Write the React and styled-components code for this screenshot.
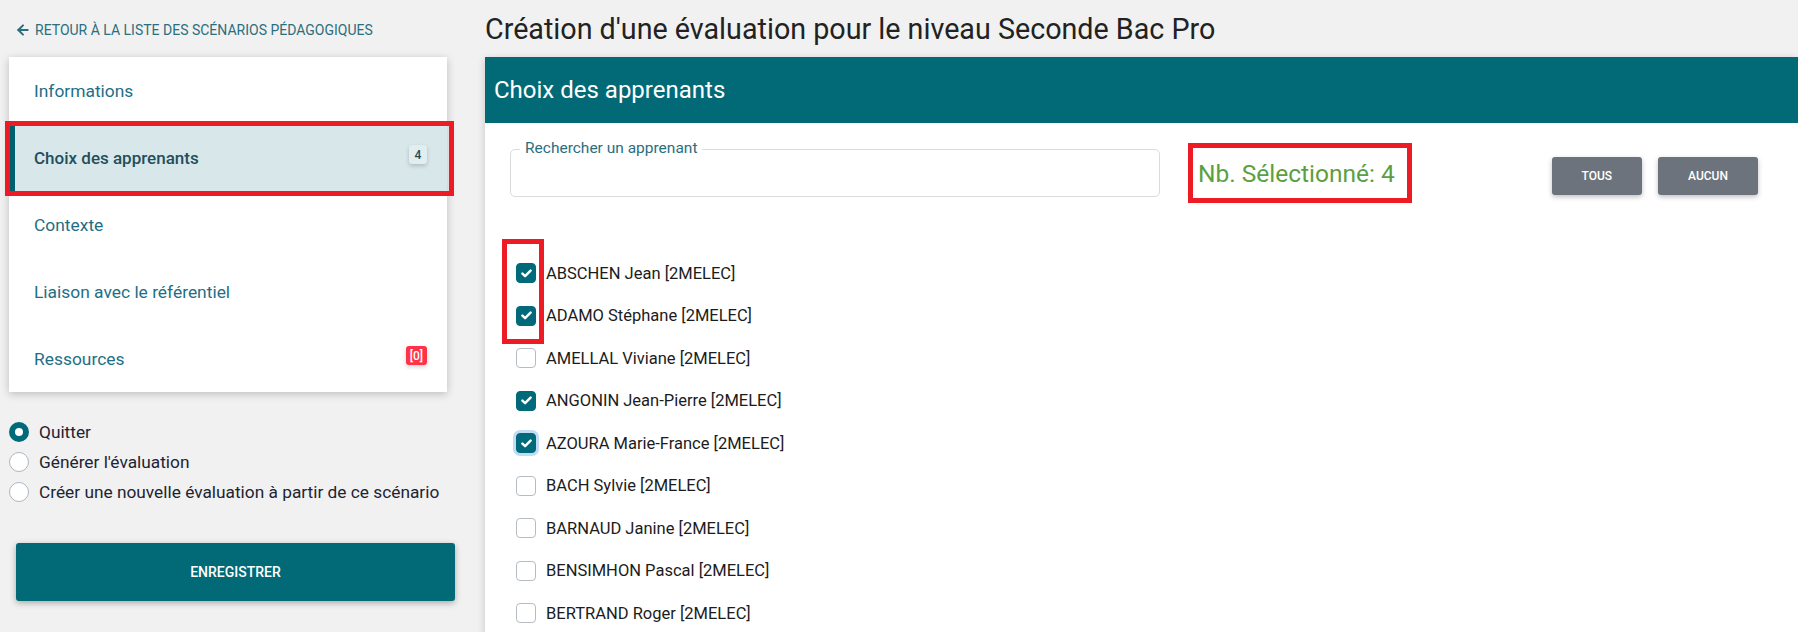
import React from 'react';
import styled, { createGlobalStyle, css } from 'styled-components';
import { ArrowLeft } from 'lucide-react';

const GlobalStyle = createGlobalStyle`
  html, body {
    margin: 0;
    padding: 0;
    height: 632px;
    overflow: hidden;
    background: #f1f1f1;
    font-family: Roboto, "Liberation Sans", sans-serif;
  }
  * {
    box-sizing: border-box;
  }
`;

const navItems = [
  { label: 'Informations' },
  { label: 'Choix des apprenants', active: true, badge: '4' },
  { label: 'Contexte' },
  { label: 'Liaison avec le référentiel' },
  { label: 'Ressources', badge: '[0]', danger: true },
];

const choices = [
  { label: 'Quitter', checked: true },
  { label: "Générer l'évaluation" },
  { label: 'Créer une nouvelle évaluation à partir de ce scénario' },
];

const students = [
  { name: 'ABSCHEN Jean', checked: true },
  { name: 'ADAMO Stéphane', checked: true },
  { name: 'AMELLAL Viviane' },
  { name: 'ANGONIN Jean-Pierre', checked: true },
  { name: 'AZOURA Marie-France', checked: true, focus: true },
  { name: 'BACH Sylvie' },
  { name: 'BARNAUD Janine' },
  { name: 'BENSIMHON Pascal' },
  { name: 'BERTRAND Roger' },
];

const App = () => {
  return (
    <>
      <GlobalStyle />
      <Page>
        <Sidebar>
          <BackLink>
            <ArrowLeft size={16} strokeWidth={3} />
            <span>Retour à la liste des scénarios pédagogiques</span>
          </BackLink>

          <NavCard>
            {navItems.map((item) => (
              <NavItem key={item.label} $active={item.active}>
                <span>{item.label}</span>
                {item.badge && <Badge $danger={item.danger}>{item.badge}</Badge>}
                {item.active && <Highlight $variant="nav" />}
              </NavItem>
            ))}
          </NavCard>

          <RadioGroup>
            {choices.map((c) => (
              <RadioRow key={c.label}>
                <RadioDot $checked={c.checked} />
                <span>{c.label}</span>
              </RadioRow>
            ))}
          </RadioGroup>

          <SaveButton>Enregistrer</SaveButton>
        </Sidebar>

        <Main>
          <Title>Création d'une évaluation pour le niveau Seconde Bac Pro</Title>
          <Panel>
            <PanelHeader>Choix des apprenants</PanelHeader>
            <PanelBody>
              <Toolbar>
                <SearchField>
                  <SearchLabel>Rechercher un apprenant</SearchLabel>
                </SearchField>
                <Counter>
                  Nb. Sélectionné: 4
                  <Highlight $variant="counter" />
                </Counter>
                <Actions>
                  <GrayButton>Tous</GrayButton>
                  <GrayButton>Aucun</GrayButton>
                </Actions>
              </Toolbar>

              <StudentList>
                <Highlight $variant="checks" />
                {students.map((s) => (
                  <StudentRow key={s.name}>
                    <Checkbox $checked={s.checked} $focus={s.focus}>
                      {s.checked && (
                        <svg width="11" height="9" viewBox="0 0 11 9">
                          <path
                            d="M1.4 4.6 L4.1 7.2 L9.6 1.6"
                            fill="none"
                            stroke="#fff"
                            strokeWidth="2.4"
                            strokeLinecap="round"
                            strokeLinejoin="round"
                          />
                        </svg>
                      )}
                    </Checkbox>
                    <span>{s.name} [2MELEC]</span>
                  </StudentRow>
                ))}
              </StudentList>
            </PanelBody>
          </Panel>
        </Main>
      </Page>
    </>
  );
};

const Page = styled.div`
  display: flex;
  width: 1798px;
  height: 632px;
  overflow: hidden;
  padding-left: 9px;
`;

const Sidebar = styled.aside`
  flex: 0 0 446px;
  display: flex;
  flex-direction: column;

  & > * {
    flex: none;
  }
`;

const BackLink = styled.a`
  height: 57px;
  display: flex;
  align-items: center;
  gap: 4px;
  padding: 2px 0 0 6px;
  color: #2b6e7d;
  font-size: 14px;
  text-transform: uppercase;
  cursor: pointer;

  svg {
    flex: none;
  }
`;

const NavCard = styled.nav`
  width: 438px;
  background: #fff;
  box-shadow: 0 2px 8px rgba(0, 0, 0, 0.22);
`;

const NavItem = styled.div`
  position: relative;
  height: 67px;
  display: flex;
  align-items: center;
  justify-content: space-between;
  padding: 0 20px 0 25px;
  font-size: 17.4px;
  color: #1e6f86;

  ${(p) =>
    p.$active &&
    css`
      background: #d8e7ea;
      color: #1f4f5c;
      font-size: 17px;
      font-weight: 500;
      box-shadow: inset 6px 0 0 #00606d;
    `}
`;

const Badge = styled.span`
  min-width: 18px;
  height: 19px;
  padding: 0 4px;
  margin-top: -6px;
  border-radius: 3px;
  display: inline-flex;
  align-items: center;
  justify-content: center;
  font-size: 12px;
  font-weight: 500;
  background: ${(p) => (p.$danger ? '#ff3347' : '#e2edef')};
  color: ${(p) => (p.$danger ? '#fff' : '#1d4d5a')};
  box-shadow: 0 2px 4px rgba(0, 0, 0, 0.18);
`;

const Highlight = styled.span`
  position: absolute;
  border: 5px solid #ed1c24;
  pointer-events: none;

  ${(p) =>
    p.$variant === 'nav' &&
    css`
      top: -3px;
      bottom: -5px;
      left: -4px;
      right: -7px;
    `}
  ${(p) =>
    p.$variant === 'counter' &&
    css`
      inset: 0;
    `}
  ${(p) =>
    p.$variant === 'checks' &&
    css`
      top: -13px;
      left: -14px;
      width: 42px;
      height: 105px;
    `}
`;

const RadioGroup = styled.div`
  margin-top: 25px;
  display: flex;
  flex-direction: column;
`;

const RadioRow = styled.label`
  height: 30px;
  display: flex;
  align-items: center;
  gap: 10px;
  font-size: 17.3px;
  color: #1d2433;
`;

const RadioDot = styled.span`
  width: 20px;
  height: 20px;
  border-radius: 50%;
  flex: none;
  background: #fff;
  border: ${(p) => (p.$checked ? '6px solid #00697a' : '1px solid #aeb6bf')};
`;

const SaveButton = styled.button`
  margin: 36px 0 0 7px;
  width: 439px;
  height: 58px;
  border: none;
  border-radius: 3px;
  background: #016a76;
  color: #fff;
  font-family: inherit;
  font-size: 14px;
  font-weight: 500;
  text-transform: uppercase;
  box-shadow: 0 2px 6px rgba(0, 0, 0, 0.3);
  cursor: pointer;
`;

const Main = styled.main`
  flex: 1;
  margin-left: 30px;
  display: flex;
  flex-direction: column;
  min-width: 0;
`;

const Title = styled.h1`
  flex: none;
  margin: 0;
  height: 57px;
  display: flex;
  align-items: center;
  font-size: 28.7px;
  font-weight: 400;
  color: #222;
`;

const Panel = styled.section`
  flex: none;
  background: #fff;
  box-shadow: 0 2px 8px rgba(0, 0, 0, 0.18);
`;

const PanelHeader = styled.div`
  height: 66px;
  display: flex;
  align-items: center;
  padding-left: 9px;
  background: #016a76;
  color: #fff;
  font-size: 24px;
`;

const PanelBody = styled.div`
  padding: 20px 40px 0 25px;
`;

const Toolbar = styled.div`
  display: flex;
  align-items: center;
  height: 60px;
`;

const SearchField = styled.div`
  position: relative;
  width: 650px;
  height: 48px;
  border: 1px solid #d9dcdf;
  border-radius: 5px;
`;

const SearchLabel = styled.span`
  position: absolute;
  top: -11px;
  left: 9px;
  padding: 0 5px;
  background: #fff;
  color: #2b6e7d;
  font-size: 15.5px;
`;

const Counter = styled.div`
  position: relative;
  margin-left: 28px;
  width: 224px;
  height: 60px;
  display: flex;
  align-items: center;
  padding-left: 10px;
  color: #5b9f42;
  font-size: 24.5px;
`;

const Actions = styled.div`
  margin-left: auto;
  margin-top: 6px;
  display: flex;
  gap: 16px;
`;

const GrayButton = styled.button`
  height: 38px;
  padding: 0 30px;
  border: none;
  border-radius: 3px;
  background: #6c737c;
  color: #fff;
  font-family: inherit;
  font-size: 12px;
  font-weight: 500;
  text-transform: uppercase;
  box-shadow: 0 2px 5px rgba(0, 0, 0, 0.25);
  cursor: pointer;
`;

const StudentList = styled.div`
  position: relative;
  margin: 49px 0 0 6px;
  display: flex;
  flex-direction: column;
`;

const StudentRow = styled.label`
  height: 42.5px;
  display: flex;
  align-items: center;
  gap: 10px;
  font-size: 16.5px;
  color: #1c1c1c;
`;

const Checkbox = styled.span`
  width: 20px;
  height: 20px;
  flex: none;
  border-radius: 4px;
  display: inline-flex;
  align-items: center;
  justify-content: center;
  background: ${(p) => (p.$checked ? '#00697a' : '#fff')};
  border: 1px solid ${(p) => (p.$checked ? '#00697a' : '#b5bcc4')};
  ${(p) =>
    p.$focus &&
    css`
      box-shadow: 0 0 0 3px #c3dcf5;
    `}
`;

export default App;
